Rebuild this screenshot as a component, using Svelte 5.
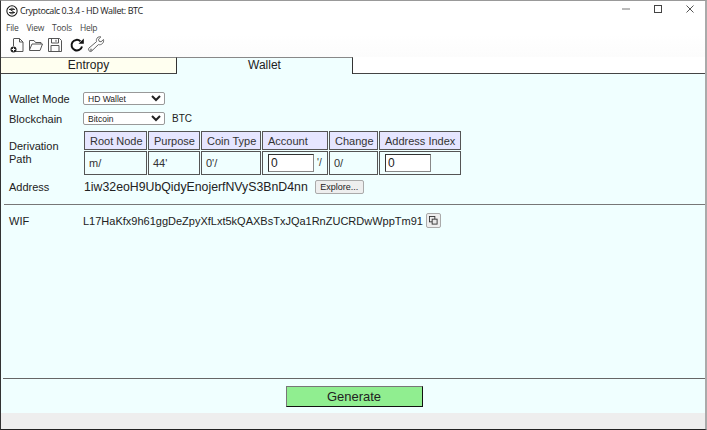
<script lang="ts">
  let walletMode = 'HD Wallet';
  let blockchain = 'Bitcoin';
  const menus = ['File', 'View', 'Tools', 'Help'];
  const headers = ['Root Node', 'Purpose', 'Coin Type', 'Account', 'Change', 'Address Index'];
</script>

<div class="window">
  <div class="titlebar">
    <svg class="app-icon" viewBox="0 0 14 14" width="12" height="12">
      <circle cx="7" cy="7" r="6" fill="none" stroke="#111" stroke-width="1.2" />
      <path d="M3.5 5.2h7M3.5 8.8h7M9 4.3C7.5 3.4 5 3.8 5 5.2S9 6.8 9 8.6 6.500 10.700 5 9.700" fill="none" stroke="#111" stroke-width="1" />
    </svg>
    <span class="title">Cryptocalc 0.3.4 - HD Wallet: BTC</span>
    <div class="controls">
      <svg viewBox="0 0 8 8" width="8" height="8"><path d="M0 4h8" stroke="#777" stroke-width="1" /></svg>
      <svg viewBox="0 0 8 8" width="8" height="8"><rect x=".5" y=".5" width="7" height="7" fill="none" stroke="#444" stroke-width="1" /></svg>
      <svg viewBox="0 0 8 8" width="8" height="8"><path d="M.5.5l7 7M7.500.5l-7 7" stroke="#555" stroke-width="1" /></svg>
    </div>
  </div>

  <div class="menubar">
    {#each menus as m}<span>{m}</span>{/each}
  </div>

  <div class="toolbar">
    <svg viewBox="0 0 16 16" width="16" height="16">
      <path d="M5 1.500h5.500L14 5v9.500H4.500M10.500 1.500V5H14M4.500 1.500V9" fill="none" stroke="#555" stroke-width="1" />
      <circle cx="4.500" cy="12.500" r="3" fill="#222" />
      <path d="M2.700 12.500h3.600M4.500 10.700v3.600" stroke="#fff" stroke-width="1" />
    </svg>
    <svg viewBox="0 0 16 16" width="16" height="16">
      <path d="M1.500 13V3.500h4.500l1.500 2h5.500V7M1.500 13l2.500-6h10.500l-2.500 6.500H1.500z" fill="none" stroke="#555" stroke-width="1" />
    </svg>
    <svg viewBox="0 0 16 16" width="16" height="16">
      <path d="M1.500 1.500h11l2 2v11h-13z M4.500 1.500v4.500h7V1.500M9 2.800v2M4 14.500V8.500h8v6" fill="none" stroke="#555" stroke-width="1" />
    </svg>
    <svg class="reload" viewBox="0 0 16 16" width="16" height="16">
      <path d="M13 9.500A5.300 5.300 0 1 1 11.400 4.200" fill="none" stroke="#111" stroke-width="2" />
      <path d="M9.500 6.800h5.300V1.500z" fill="#111" />
    </svg>
    <svg class="wrench" viewBox="0 0 18 18" width="18" height="18">
      <path d="M16.500 3.500l-2.500 2.300-2-.6-.5-2 2.400-2.300c-2-.6-4.200.6-4.500 2.700-.1.800 0 1.400.2 2L2 12c-1.600 1.500.6 4.600 2.600 3.100l6.800-6.500c2.800.8 5.900-1.600 5.100-5.100z" fill="none" stroke="#666" stroke-width="1" />
      <circle cx="4" cy="14" r="1" fill="none" stroke="#666" stroke-width=".8" />
    </svg>
  </div>

  <div class="tabs">
    <div class="tab">Entropy</div>
    <div class="tab active">Wallet</div>
  </div>

  <div class="content">
    <div class="main">
      <div class="row mode">
        <span class="label">Wallet Mode</span>
        <select bind:value={walletMode}>
          <option>HD Wallet</option>
          <option>Simple Wallet</option>
        </select>
      </div>
      <div class="row chain">
        <span class="label">Blockchain</span>
        <select bind:value={blockchain}>
          <option>Bitcoin</option>
          <option>Ethereum</option>
        </select>
        <span class="ticker">BTC</span>
      </div>
      <div class="row path">
        <span class="label path-label">Derivation Path</span>
        <table>
          <thead>
            <tr>
              {#each headers as h}<th>{h}</th>{/each}
            </tr>
          </thead>
          <tbody>
            <tr>
              <td>m/</td>
              <td>44'</td>
              <td>0'/</td>
              <td><input class="num" value="0" /><span class="tick">'/</span></td>
              <td>0/</td>
              <td><input class="num" value="0" /></td>
            </tr>
          </tbody>
        </table>
      </div>
      <div class="row address">
        <span class="label">Address</span>
        <span class="addr">1iw32eoH9UbQidyEnojerfNVyS3BnD4nn</span>
        <button class="small">Explore...</button>
      </div>
      <hr />
      <div class="row wif">
        <span class="label">WIF</span>
        <span class="wif-value">L17HaKfx9h61ggDeZpyXfLxt5kQAXBsTxJQa1RnZUCRDwWppTm91</span>
        <button class="copy" aria-label="Copy">
          <svg viewBox="0 0 10 10" width="9" height="9">
            <rect x=".5" y=".5" width="6" height="6" fill="none" stroke="#333" stroke-width="1" />
            <rect x="3.500" y="3.500" width="5.500" height="5.500" fill="#e8e8e8" stroke="#333" stroke-width="1" />
          </svg>
        </button>
      </div>
    </div>
    <div class="footer">
      <button class="generate">Generate</button>
    </div>
  </div>
  <div class="status"></div>
</div>

<style>
  :global(body) {
    margin: 0;
    background: #fff;
  }

  .window {
    width: 707px;
    height: 430px;
    box-sizing: border-box;
    border-top: 1px solid #999;
    border-left: 1px solid #333;
    border-right: 2px solid #aaa;
    border-bottom: 1px solid #222;
    display: flex;
    flex-direction: column;
    font-family: "Liberation Sans", Arial, sans-serif;
    color: #222;
    overflow: hidden;
  }

  .titlebar {
    height: 19px;
    display: flex;
    align-items: center;
    padding-left: 5px;
    font-family: "Open Sans", "Noto Sans", sans-serif;
    font-size: 9px;
    color: #222;
  }

  .app-icon {
    margin-right: 2px;
  }

  .title {
    letter-spacing: -0.42px;
  }

  .controls {
    margin-left: auto;
    display: flex;
    gap: 24px;
    padding: 0 11px 3px 0;
  }

  .controls svg {
    display: block;
  }

  .menubar {
    height: 14px;
    display: flex;
    gap: 8px;
    align-items: center;
    padding: 1px 0 0 5px;
    box-sizing: border-box;
    font-family: "Open Sans", "Noto Sans", sans-serif;
    font-size: 8.500px;
    letter-spacing: -0.25px;
    color: #444;
  }

  .toolbar {
    height: 23px;
    box-sizing: border-box;
    display: flex;
    align-items: center;
    gap: 3px;
    padding: 0 0 1px 8px;
    background: linear-gradient(#fff, #fcfcfc);
  }

  .reload {
    margin-left: 3px;
  }

  .wrench {
    margin-left: -1px;
  }

  .tabs {
    height: 17px;
    box-sizing: border-box;
    display: flex;
    border-bottom: 1px solid #444;
    font-size: 12px;
  }

  .tab {
    width: 176px;
    box-sizing: border-box;
    height: 16px;
    line-height: 15px;
    text-align: center;
    background: #fffff0;
    border-top: 1px solid #888;
    border-right: 1px solid #333;
  }

  .tab.active {
    background: #f0ffff;
    height: 17px;
    position: relative;
    z-index: 1;
  }

  .content {
    flex: 1;
    display: flex;
    flex-direction: column;
    background: #f0ffff;
  }

  .main {
    flex: 1;
    padding-left: 2px;
  }

  .row {
    display: flex;
    align-items: center;
    font-size: 11px;
  }

  .label {
    width: 74px;
    padding-left: 6px;
    flex: none;
    color: #222;
  }

  .mode {
    margin-top: 16px;
    height: 17px;
  }

  .chain {
    margin-top: 3px;
    height: 17px;
  }

  select {
    width: 82px;
    height: 13px;
    box-sizing: border-box;
    padding: 0;
    font-family: "Liberation Sans", Arial, sans-serif;
    font-size: 8.500px;
    color: #222;
    background: #fff;
    border: 1px solid #999;
    border-radius: 2px;
  }

  .ticker {
    margin-left: 7px;
    font-size: 10px;
  }

  .path {
    margin-top: 3px;
    align-items: stretch;
  }

  .path-label {
    align-self: center;
    width: 59px;
    padding-right: 15px;
    line-height: 13px;
  }

  table {
    border-collapse: separate;
    border-spacing: 1px;
    table-layout: fixed;
    width: 379px;
    font-size: 11px;
  }

  th, td {
    border: 1px solid #555;
    text-align: left;
    font-weight: normal;
    padding: 0 0 0 4px;
    white-space: nowrap;
    color: #333;
  }

  th {
    height: 17px;
    padding-left: 5px;
    background: #e6e6ff;
  }

  th:nth-child(1) { width: 56px; }
  th:nth-child(2) { width: 45px; }
  th:nth-child(3) { width: 53px; }
  th:nth-child(4) { width: 59px; }
  th:nth-child(5) { width: 42px; }
  th:nth-child(6) { width: 75px; }

  td {
    height: 22px;
  }

  .num {
    width: 46px;
    height: 18px;
    margin-left: 1px;
    box-sizing: border-box;
    padding: 0 2px;
    font-family: "Liberation Sans", Arial, sans-serif;
    font-size: 12px;
    color: #222;
    background: #fff;
    border: 1px solid #333;
    border-right-color: #888;
    border-bottom-color: #888;
    vertical-align: middle;
  }

  .tick {
    margin-left: 3px;
    font-size: 10px;
  }

  .address {
    margin-top: 2px;
    height: 17px;
  }

  .addr {
    font-size: 12.300px;
    margin: 0 7px 0 1px;
  }

  .small {
    height: 14px;
    width: 49px;
    padding: 0;
    font-family: "Liberation Sans", Arial, sans-serif;
    font-size: 9px;
    color: #222;
    background: #eee;
    border: 1px solid #aaa;
    border-radius: 2px;
  }

  hr {
    border: none;
    border-top: 1px solid #777;
    height: 0;
    margin: 9px 0 0 1px;
  }

  .wif {
    margin-top: 8px;
    height: 15px;
  }

  .wif-value {
    font-size: 11px;
    margin-right: 3px;
  }

  .copy {
    width: 15px;
    height: 15px;
    padding: 0;
    display: flex;
    align-items: center;
    justify-content: center;
    background: #eee;
    border: 1px solid #aaa;
    border-radius: 2px;
  }

  .footer {
    height: 35px;
    margin-left: 2px;
    border-top: 1px solid #666;
    box-sizing: border-box;
    display: flex;
    justify-content: center;
    align-items: center;
  }

  .generate {
    width: 137px;
    height: 21px;
    padding: 0;
    font-family: "Liberation Sans", Arial, sans-serif;
    font-size: 13px;
    color: #222;
    background: #90ee90;
    border: 1px solid #111;
    border-top-color: #777;
    border-left-color: #777;
  }

  .status {
    height: 16px;
    background: #eeeeee;
  }
</style>
